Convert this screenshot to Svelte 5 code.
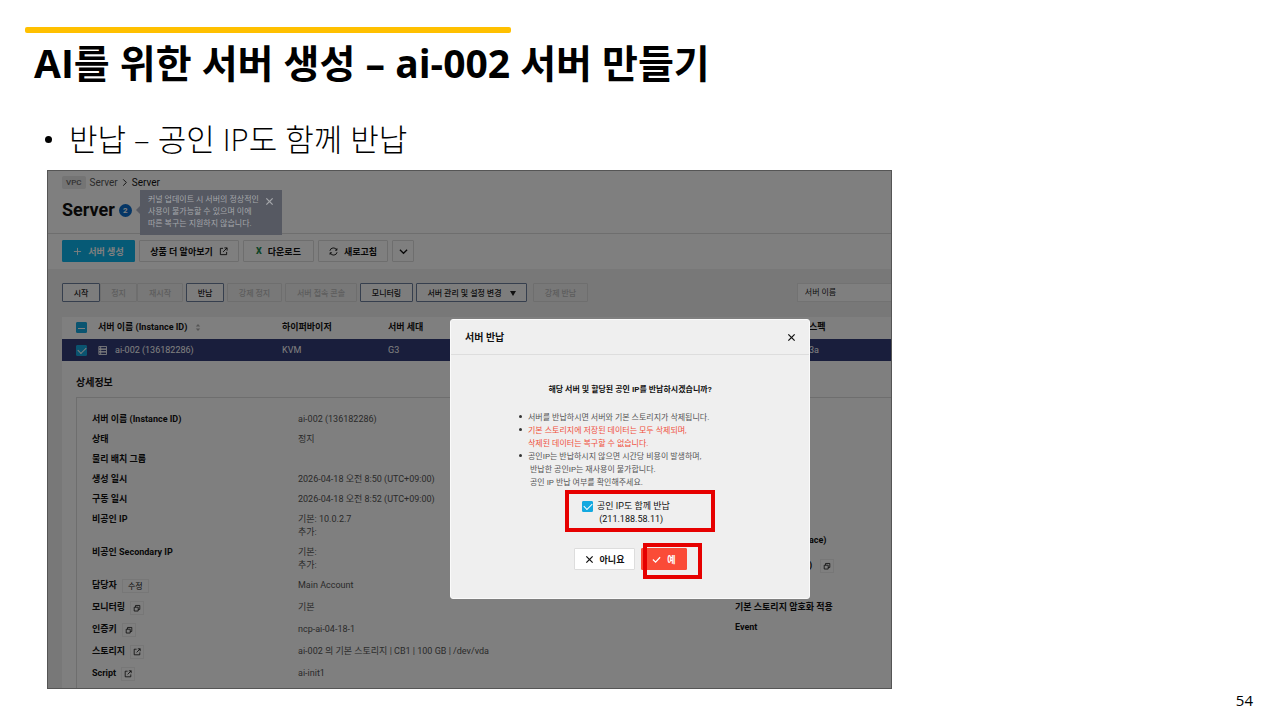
<script lang="ts">
	interface DetailRow {
		label: string;
		values: string[];
		action?: 'edit' | 'copy' | 'open';
		size?: 'double' | 'tall';
	}

	const powerActions = [
		{ label: '시작', enabled: true, width: 38 },
		{ label: '정지', enabled: false, width: 37 },
		{ label: '재시작', enabled: false, width: 46 }
	];

	const rows: DetailRow[] = [
		{ label: '서버 이름 (Instance ID)', values: ['ai-002 (136182286)'] },
		{ label: '상태', values: ['정지'] },
		{ label: '물리 배치 그룹', values: [] },
		{ label: '생성 일시', values: ['2026-04-18 오전 8:50 (UTC+09:00)'] },
		{ label: '구동 일시', values: ['2026-04-18 오전 8:52 (UTC+09:00)'] },
		{ label: '비공인 IP', values: ['기본: 10.0.2.7', '추가:'], size: 'double' },
		{ label: '비공인 Secondary IP', values: ['기본:', '추가:'], size: 'double' },
		{ label: '담당자', values: ['Main Account'], action: 'edit', size: 'tall' },
		{ label: '모니터링', values: ['기본'], action: 'copy', size: 'tall' },
		{ label: '인증키', values: ['ncp-ai-04-18-1'], action: 'copy', size: 'tall' },
		{ label: '스토리지', values: ['ai-002 의 기본 스토리지 | CB1 | 100 GB | /dev/vda'], action: 'open', size: 'tall' },
		{ label: 'Script', values: ['ai-init1'], action: 'open', size: 'tall' }
	];

	let allChecked = $state(true);
	let rowChecked = $state(true);
	let releaseIp = $state(true);
</script>

{#snippet openIcon()}
	<svg class="icon" viewBox="0 0 10 10"><path d="M4.5 1.5H1.5V8.5H8.5V5.5M6 1H9V4M9 1L4.5 5.5" /></svg>
{/snippet}

{#snippet copyIcon()}
	<svg class="icon" viewBox="0 0 10 10"><path d="M1.5 4H6.5V8.8H1.5ZM3.2 4V1.8H8.5V6.8H6.5" /></svg>
{/snippet}

{#snippet closeIcon()}
	<svg class="icon cross" viewBox="0 0 10 10"><path d="M1.5 1.5L8.5 8.5M8.5 1.5L1.5 8.5" /></svg>
{/snippet}

<main class="slide">
	<div class="accent"></div>
	<h1>AI를 위한 서버 생성 – ai-002 서버 만들기</h1>
	<ul class="points">
		<li>반납 – 공인 IP도 함께 반납</li>
	</ul>

	<section class="screen">
		<header class="page-head">
			<nav class="crumbs">
				<span class="tag">VPC</span>
				<a href="#server">Server</a>
				<svg class="icon chevron" viewBox="0 0 6 10"><path d="M1 1.5L4.5 5L1 8.5" /></svg>
				<strong>Server</strong>
			</nav>
			<div class="title-row">
				<h2>Server</h2>
				<span class="count">2</span>
				<div class="tooltip">
					<p>커널 업데이트 시 서버의 정상적인<br />사용이 불가능할 수 있으며 이에<br />따른 복구는 지원하지 않습니다.</p>
					<button class="bare" aria-label="닫기">{@render closeIcon()}</button>
				</div>
			</div>
		</header>

		<div class="actions">
			<button class="btn create"><svg class="icon" viewBox="0 0 10 10"><path d="M5 1V9M1 5H9" /></svg>서버 생성</button>
			<button class="btn more">상품 더 알아보기{@render openIcon()}</button>
			<button class="btn download"><b class="excel">X</b>다운로드</button>
			<button class="btn refresh">
				<svg class="icon" viewBox="0 0 10 10">
					<path d="M1 4.2A4 4 0 0 1 8.6 3.4M9 5.8A4 4 0 0 1 1.4 6.6M8.8 1.4V3.6H6.8M1.2 8.6V6.4H3.2" />
				</svg>새로고침
			</button>
			<button class="btn drop" aria-label="더보기">
				<svg class="icon cross" viewBox="0 0 10 10"><path d="M1 3L5 7L9 3" /></svg>
			</button>
		</div>

		<div class="content">
			<div class="toolbar">
				<div class="group">
					{#each powerActions as action}
						<button class="tool" disabled={!action.enabled} style="width: {action.width}px">{action.label}</button>
					{/each}
				</div>
				<button class="tool return">반납</button>
				<button class="tool stop" disabled>강제 정지</button>
				<button class="tool console" disabled>서버 접속 콘솔</button>
				<button class="tool monitor">모니터링</button>
				<button class="tool manage">서버 관리 및 설정 변경<span class="caret"></span></button>
				<button class="tool force" disabled>강제 반납</button>
				<select class="filter" aria-label="검색 조건">
					<option>서버 이름</option>
				</select>
			</div>

			<div class="panel">
				<table>
					<colgroup>
						<col class="c-check" />
						<col class="c-name" />
						<col class="c-hyper" />
						<col class="c-gen" />
						<col />
					</colgroup>
					<thead>
						<tr>
							<th><input class="check partial" type="checkbox" aria-label="전체 선택" bind:checked={allChecked} /></th>
							<th>
								<span class="cell">
									서버 이름 (Instance ID)
									<svg class="sort" viewBox="0 0 6 10"><path d="M0.5 4L3 1L5.5 4ZM0.5 6L3 9L5.5 6Z" /></svg>
								</span>
							</th>
							<th>하이퍼바이저</th>
							<th>서버 세대</th>
							<th>스펙</th>
						</tr>
					</thead>
					<tbody>
						<tr>
							<td><input class="check" type="checkbox" aria-label="ai-002" bind:checked={rowChecked} /></td>
							<td>
								<span class="cell">
									<svg class="icon" viewBox="0 0 10 10"><path d="M1 0.5H9.5V3.5H1ZM1 3.5H9.5V6.5H1ZM1 6.5H9.5V9.5H1ZM3 0.5V9.5" /></svg>
									ai-002 (136182286)
								</span>
							</td>
							<td>KVM</td>
							<td>G3</td>
							<td>3a</td>
						</tr>
					</tbody>
				</table>

				<h3>상세정보</h3>
				<div class="details">
					<dl class="main-info">
						{#each rows as row}
							<div class="row {row.size ?? ''}">
								<dt>
									{row.label}
									{#if row.action === 'edit'}
										<button class="mini edit">수정</button>
									{:else if row.action === 'copy'}
										<button class="mini" aria-label="{row.label} 보기">{@render copyIcon()}</button>
									{:else if row.action === 'open'}
										<button class="mini" aria-label="{row.label} 열기">{@render openIcon()}</button>
									{/if}
								</dt>
								<dd>
									{#each row.values as value}
										<span>{value}</span>
									{/each}
								</dd>
							</div>
						{/each}
					</dl>
					<div class="side-info">
						<p class="cut">ace)</p>
						<p class="cut">)<button class="mini" aria-label="보기">{@render copyIcon()}</button></p>
						<p class="encrypt">기본 스토리지 암호화 적용</p>
						<p>Event</p>
					</div>
				</div>
			</div>
		</div>

		<div class="backdrop"></div>
		<div class="modal" role="dialog" aria-labelledby="modal-title">
			<header class="modal-head">
				<h2 id="modal-title">서버 반납</h2>
				<button class="bare" aria-label="닫기">{@render closeIcon()}</button>
			</header>
			<div class="modal-body">
				<p class="question">해당 서버 및 할당된 공인 IP를 반납하시겠습니까?</p>
				<ul class="notes">
					<li>서버를 반납하시면 서버와 기본 스토리지가 삭제됩니다.</li>
					<li class="warn">기본 스토리지에 저장된 데이터는 모두 삭제되며,<br />삭제된 데이터는 복구할 수 없습니다.</li>
					<li>공인IP는 반납하시지 않으면 시간당 비용이 발생하며,<br />&nbsp;반납한 공인IP는 재사용이 불가합니다.<br />&nbsp;공인 IP 반납 여부를 확인해주세요.</li>
				</ul>
				<label class="release">
					<input class="check" type="checkbox" bind:checked={releaseIp} />
					<span>공인 IP도 함께 반납<br />&nbsp;(211.188.58.11)</span>
				</label>
				<div class="answers">
					<button class="btn no">{@render closeIcon()}아니요</button>
					<button class="btn yes"><svg class="icon cross" viewBox="0 0 10 10"><path d="M1 5L4 8L9 2.5" /></svg>예</button>
				</div>
			</div>
			<div class="mark mark-ip"></div>
			<div class="mark mark-yes"></div>
		</div>
	</section>

	<footer>54</footer>
</main>

<style>
	:global(body) {
		background: #fff;
	}

	.slide,
	.slide :global(*) {
		box-sizing: border-box;
	}

	.slide {
		display: flex;
		flex-direction: column;
		min-height: 100vh;
		padding-top: 27px;
		overflow: hidden;
		color: #000;
		font-family: 'Open Sans', 'Noto Sans CJK KR', sans-serif;
	}

	h1, h2, h3, p, ul, dl, dd {
		margin: 0;
		padding: 0;
	}

	button, select {
		padding: 0;
		font-family: inherit;
		cursor: pointer;
	}

	.accent {
		width: 38vw;
		height: 6px;
		margin-left: 25px;
		border-radius: 2px;
		background: #ffc000;
	}

	h1 {
		margin: 6px 0 0 34px;
		font-size: 39px;
		line-height: 48px;
		white-space: nowrap;
	}

	.points {
		margin: 32px 0 11px 69px;
		font-size: 31px;
		font-weight: 300;
		line-height: 40px;
		list-style: none;
	}

	.points li::before {
		content: '';
		float: left;
		width: 7px;
		height: 7px;
		margin: 17px 0 0 -24px;
		border-radius: 50%;
		background: #000;
	}

	.screen {
		position: relative;
		width: 66vw;
		margin-left: 47px;
		overflow: hidden;
		background: #fff;
		color: #111;
		font-family: Roboto, 'Noto Sans CJK KR', sans-serif;
		font-size: 9px;
		line-height: 13px;
		white-space: nowrap;
	}

	.icon {
		flex: none;
		width: 9px;
		height: 9px;
		fill: none;
		stroke: currentColor;
		stroke-width: 1;
	}

	.cross {
		stroke-width: 1.4;
	}

	.page-head {
		height: 64px;
		padding: 6px 0 0 15px;
		border-bottom: 1px solid #ddd;
	}

	.crumbs {
		display: flex;
		align-items: center;
		gap: 4px;
		font-size: 10px;
	}

	.crumbs a {
		color: #555;
		text-decoration: none;
	}

	.crumbs strong {
		font-weight: 400;
	}

	.tag {
		padding: 0 4px;
		border-radius: 2px;
		background: #e8e8e8;
		color: #666;
		font-size: 8px;
		font-weight: 500;
	}

	.chevron {
		width: 6px;
	}

	.title-row {
		display: flex;
		align-items: center;
		height: 42px;
	}

	.title-row h2 {
		font-size: 18px;
		line-height: 24px;
	}

	.count {
		width: 13px;
		height: 13px;
		margin: 0 8px 0 4px;
		border-radius: 50%;
		background: #0a6ccc;
		color: #fff;
		font-size: 8px;
		font-weight: 700;
		text-align: center;
	}

	.tooltip {
		position: relative;
		z-index: 2;
		display: flex;
		gap: 6px;
		width: 142px;
		height: 45px;
		margin-top: 5px;
		padding: 4px 8px;
		background: #565962;
		color: #a4a6aa;
		font-size: 8px;
	}

	.tooltip::before {
		content: '';
		position: absolute;
		top: 16px;
		left: -4px;
		border: 4px solid transparent;
		border-left: 0;
		border-right-color: #565962;
	}

	.tooltip p {
		flex: 1;
		line-height: 12px;
	}

	.bare {
		height: 14px;
		border: 0;
		background: none;
		color: inherit;
	}

	.actions {
		display: flex;
		gap: 4px;
		padding: 6px 0 7px 15px;
	}

	.btn {
		display: flex;
		align-items: center;
		justify-content: center;
		gap: 6px;
		height: 22px;
		border: 1px solid #ddd;
		border-radius: 1px;
		background: #fff;
		color: #111;
		font-size: 9px;
		font-weight: 700;
	}

	.create {
		width: 73px;
		border-color: #0cb5ec;
		background: #0cb5ec;
		color: #fff;
	}

	.more {
		width: 100px;
	}

	.download {
		width: 71px;
	}

	.refresh {
		width: 70px;
	}

	.drop {
		width: 22px;
	}

	.excel {
		color: #1c8a50;
		font-weight: 900;
	}

	.content {
		padding: 14px 0 0 15px;
		background: #f0f0f0;
	}

	.toolbar {
		display: flex;
		gap: 3px;
		height: 20px;
	}

	.group {
		display: flex;
	}

	.tool {
		height: 19px;
		border: 1px solid #6c7f9c;
		border-radius: 1px;
		background: #fbfbfb;
		color: #222;
		font-size: 8px;
		font-weight: 500;
	}

	.tool:disabled {
		border-color: #dcdcdc;
		background: #f0f0f0;
		color: #bbb;
	}

	.return {
		width: 38px;
	}

	.stop,
	.force {
		width: 55px;
	}

	.force {
		margin-left: 3px;
	}

	.console {
		width: 72px;
	}

	.monitor {
		width: 53px;
	}

	.manage {
		width: 111px;
	}

	.caret {
		display: inline-block;
		margin-left: 8px;
		border: 3px solid transparent;
		border-top: 5px solid #222;
		border-bottom: 0;
	}

	.filter {
		flex: none;
		width: 141px;
		height: 19px;
		margin: 0 -46px 0 auto;
		padding-left: 7px;
		appearance: none;
		border: 1px solid #e4e4e4;
		border-radius: 0;
		background: #fff;
		color: #222;
		font-size: 8px;
	}

	.panel {
		margin-top: 14px;
		background: #fff;
	}

	table {
		width: 100%;
		border-collapse: collapse;
		table-layout: fixed;
	}

	th,
	td {
		height: 22px;
		padding: 0;
		text-align: left;
		overflow: hidden;
	}

	th {
		padding-bottom: 2px;
	}

	tbody tr {
		background: #333c78;
		color: #fff;
	}

	.c-check {
		width: 36px;
	}

	.c-name {
		width: 184px;
	}

	.c-hyper {
		width: 106px;
	}

	.c-gen {
		width: 421px;
	}

	.cell {
		display: flex;
		align-items: center;
		gap: 8px;
	}

	.sort {
		width: 6px;
		height: 9px;
		fill: #aaa;
	}

	.check {
		display: block;
		position: relative;
		width: 11px;
		height: 11px;
		margin: 0;
		appearance: none;
		border: 1px solid #aaa;
		border-radius: 1px;
		background: #fff;
	}

	th .check,
	td .check {
		margin-left: 14px;
	}

	.check:checked {
		border-color: #14a9e0;
		background: #14a9e0;
	}

	.check:checked::after {
		content: '';
		position: absolute;
		top: 1px;
		left: 1px;
		width: 7px;
		height: 4px;
		border: solid #fff;
		border-width: 0 0 1px 1px;
		transform: rotate(-45deg);
	}

	.partial:checked::after {
		top: 4px;
		height: 1px;
		border-width: 0 0 1px;
		transform: none;
	}

	h3 {
		margin: 14px 0 6px 14px;
		font-size: 10px;
		line-height: 16px;
	}

	.details {
		display: flex;
		margin-left: 14px;
		padding: 12px 0 3px 15px;
		border: 1px solid #ddd;
		border-width: 1px 0 0 1px;
	}

	.main-info {
		flex: none;
		width: 643px;
	}

	.row {
		display: grid;
		grid-template-columns: 206px 1fr;
		height: 20px;
		padding-top: 3px;
	}

	.double {
		height: 33px;
	}

	.tall {
		height: 22px;
	}

	dt {
		display: flex;
		align-items: center;
		gap: 5px;
		height: 13px;
		font-weight: 700;
	}

	dd {
		color: #555;
	}

	dd span {
		display: block;
	}

	.mini {
		display: grid;
		place-items: center;
		width: 14px;
		height: 14px;
		border: 1px solid #eee;
		background: #fff;
		color: #111;
		font-size: 8px;
	}

	.mini .icon {
		width: 8px;
		height: 8px;
	}

	.edit {
		width: 27px;
	}

	.side-info {
		padding-top: 118px;
		font-weight: 700;
	}

	.side-info p {
		display: flex;
		align-items: center;
		gap: 8px;
		height: 20px;
	}

	.side-info .cut {
		height: 25px;
		padding-left: 74px;
	}

	.side-info .encrypt {
		margin-top: 19px;
	}

	.backdrop {
		position: absolute;
		inset: 0;
		z-index: 1;
		border: 1px solid #555;
		background: rgba(0, 0, 0, 0.5);
	}

	/* the dialog is centred on a browser window wider than the visible part */
	.modal {
		position: absolute;
		top: 149px;
		left: 403px;
		z-index: 3;
		width: 360px;
		height: 280px;
		border: 1px solid #fafafa;
		border-radius: 3px;
		background: #efefef;
	}

	.modal-head {
		display: flex;
		align-items: center;
		justify-content: space-between;
		height: 35px;
		padding: 0 13px 0 14px;
		border-bottom: 1px solid #ddd;
	}

	.modal-head h2 {
		font-size: 10px;
	}

	.modal-body {
		display: flex;
		flex-direction: column;
	}

	.question {
		margin-top: 28px;
		font-size: 8px;
		font-weight: 700;
		text-align: center;
	}

	.notes {
		margin: 15px 0 0 77px;
		color: #555;
		font-size: 8px;
		list-style: none;
	}

	.notes li::before {
		content: '';
		float: left;
		width: 3px;
		height: 3px;
		margin: 4px 0 0 -9px;
		border-radius: 50%;
		background: #333;
	}

	.warn {
		color: #f0503c;
	}

	.release {
		display: flex;
		gap: 4px;
		margin: 11px 0 0 131px;
	}

	.release .check {
		margin-top: 1px;
	}

	.answers {
		display: flex;
		gap: 6px;
		margin: 22px 0 0 123px;
	}

	.no {
		width: 61px;
	}

	.yes {
		width: 46px;
		border-color: #fa4b37;
		background: #fa4b37;
		color: #fff;
	}

	.mark {
		position: absolute;
		border: 4px solid #e60000;
		pointer-events: none;
	}

	.mark-ip {
		top: 170px;
		left: 114px;
		width: 150px;
		height: 42px;
	}

	.mark-yes {
		top: 223px;
		left: 192px;
		width: 59px;
		height: 36px;
	}

	footer {
		margin-top: auto;
		padding: 0 27px 12px 0;
		font-size: 15px;
		line-height: 16px;
		text-align: right;
	}
</style>
